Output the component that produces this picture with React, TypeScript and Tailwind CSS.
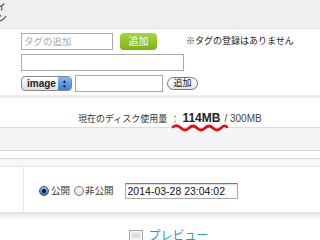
import React from 'react';

const jp = { fontFamily: '"Liberation Sans", "Noto Sans CJK JP", sans-serif' };

const App: React.FC = () => {
  return (
    <div className="w-[320px] h-[240px] overflow-hidden bg-white text-[9.5px] text-[#333]" style={jp}>
      {/* top band, clipped label from the left column */}
      <div className="h-[29px] bg-[#efefef] border-b border-[#e2e2e2] flex flex-col overflow-hidden">
        <span className="-ml-[4px] leading-[12px] text-[11px]">ィ</span>
        <span className="-ml-[4px] leading-[12px] text-[11px]">ン</span>
      </div>

      {/* tags / links */}
      <div className="h-[69px] pl-[21px] pt-[4px] flex flex-col gap-[4px] border-b-[3px] border-[#eeeeee]">
        <div className="flex items-center h-[17px]">
          <input
            className="w-[92px] h-[17px] border border-[#aaa] px-[2px] text-[9.5px] placeholder:text-[#aaa] outline-none"
            placeholder="タグの追加"
            style={jp}
          />
          <button className="ml-[7px] w-[37px] h-[17px] rounded-[4px] bg-gradient-to-b from-[#a7d63a] to-[#7db11a] text-white text-[10px] leading-[17px]">
            追加
          </button>
          <span className="ml-[29px] text-[9px] text-[#222] whitespace-nowrap">※タグの登録はありません</span>
        </div>
        <input className="w-[163px] h-[17px] border border-[#aaa] outline-none" />
        <div className="flex items-center h-[17px]">
          <div className="w-[51px] h-[15px] rounded-[4px] border border-[#888] bg-gradient-to-b from-white to-[#dedede] flex items-center overflow-hidden">
            <span className="pl-[5px] flex-1 text-[10px] font-bold text-[#222] leading-none">image</span>
            <span className="w-[13px] h-full bg-gradient-to-b from-[#8ab8f0] to-[#3d7fd8] flex flex-col items-center justify-center text-[5px] leading-[5px] text-[#123]">
              <span>▲</span>
              <span>▼</span>
            </span>
          </div>
          <input className="ml-[3px] w-[88px] h-[17px] border border-[#aaa] outline-none" />
          <button className="ml-[4px] w-[31px] h-[13px] rounded-full border border-[#777] bg-gradient-to-b from-white to-[#e4e4e4] text-[9px] leading-[11px] text-[#222]">
            追加
          </button>
        </div>
      </div>

      {/* disk usage */}
      <div className="h-[29px] relative">
        <div className="pl-[78px] pt-[11px] flex items-baseline whitespace-nowrap text-[9px] text-[#333]">
          <span>現在のディスク使用量</span>
          <span className="ml-[3px]">：</span>
          <span className="ml-[3px] font-bold text-[12px] text-[#222]">114MB</span>
          <span className="ml-[4px] text-[10px] text-[#444]">/ 300MB</span>
        </div>
        <svg className="absolute left-[171px] top-[26px]" width="58" height="8" viewBox="0 0 58 8">
          <path
            d="M2 3 Q6 0 10 4 T18 4 T26 4 T34 4 T42 4 T50 4 T56 3"
            fill="none"
            stroke="#e01010"
            strokeWidth="2.6"
            strokeLinecap="round"
          />
        </svg>
      </div>

      {/* blank bands */}
      <div className="h-[24px] bg-[#f4f4f4] border-t border-b border-[#dcdcdc]" />
      <div className="h-[8px] bg-white border-b border-[#dcdcdc]" />
      <div className="h-[8px] bg-[#f7f7f7] border-b border-[#e6e6e6]" />

      {/* publish row */}
      <div className="h-[45px] flex">
        <div className="w-[24px] border-r border-[#e6e6e6]" />
        <div className="flex items-center pl-[15px] pt-[3px] whitespace-nowrap">
          <span className="w-[10px] h-[10px] rounded-full border border-[#456] bg-gradient-to-b from-[#8ab8f2] to-[#2d6fd0] flex items-center justify-center">
            <span className="w-[4px] h-[4px] rounded-full bg-[#111]" />
          </span>
          <span className="ml-[2px]">公開</span>
          <span className="ml-[4px] w-[10px] h-[10px] rounded-full border border-[#777] bg-gradient-to-b from-white to-[#ddd]" />
          <span className="ml-[1px]">非公開</span>
          <div
            className="ml-[11px] w-[113px] h-[16px] border border-[#aaa] border-t-[#777] pl-[2px] text-[10.5px] leading-[14px] text-[#111] shadow-[inset_0_1px_1px_rgba(0,0,0,0.15)]"
            style={{ fontFamily: '"Liberation Sans", sans-serif' }}
          >
            2014-03-28 23:04:02
          </div>
        </div>
      </div>

      {/* shadow divider */}
      <div className="h-[3px] bg-[#e8e8e8] border-t border-[#dedede]" />
      <div className="h-[5px] bg-gradient-to-b from-[#f0f0f0] to-white" />

      {/* preview link */}
      <div className="flex items-center justify-center pt-[7px] pl-[18px]">
        <svg width="14" height="12" viewBox="0 0 14 12" className="mr-[5px]">
          <rect x="0.5" y="0.5" width="13" height="11" fill="#f4f4f4" stroke="#aaa" />
          <rect x="3" y="3" width="8" height="5" fill="#ddd" />
        </svg>
        <span className="text-[12px] text-[#3a8fd0] whitespace-nowrap">プレビュー</span>
      </div>
    </div>
  );
};

export default App;
